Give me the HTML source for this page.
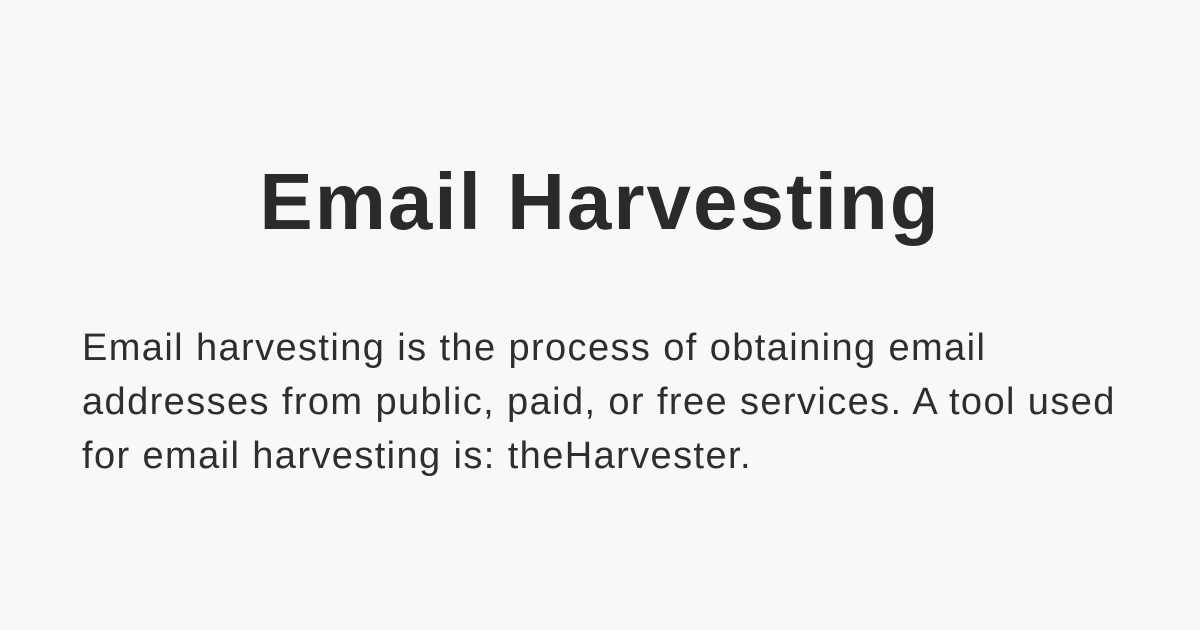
<!DOCTYPE html>
<html><head><style>
html,body{margin:0;padding:0}
body{width:1200px;height:630px;background:#f9f8f8;position:relative;overflow:hidden;font-family:"Liberation Sans","DejaVu Sans",sans-serif;color:#2a2a2a}
h1{position:absolute;left:0;width:1200px;top:157px;margin:0;text-align:center;font-size:80px;font-weight:bold;letter-spacing:2px;line-height:90px;white-space:nowrap}
p{position:absolute;left:82px;top:321px;width:1110px;margin:0;font-size:38px;letter-spacing:1.4px;line-height:54px;color:#2e2e2e;white-space:nowrap}
</style></head><body>
<h1>Email Harvesting</h1>
<p>Email harvesting is the process of obtaining email<br>addresses from public, paid, or free services. A tool used<br>for email harvesting is: theHarvester.</p>
</body></html>
